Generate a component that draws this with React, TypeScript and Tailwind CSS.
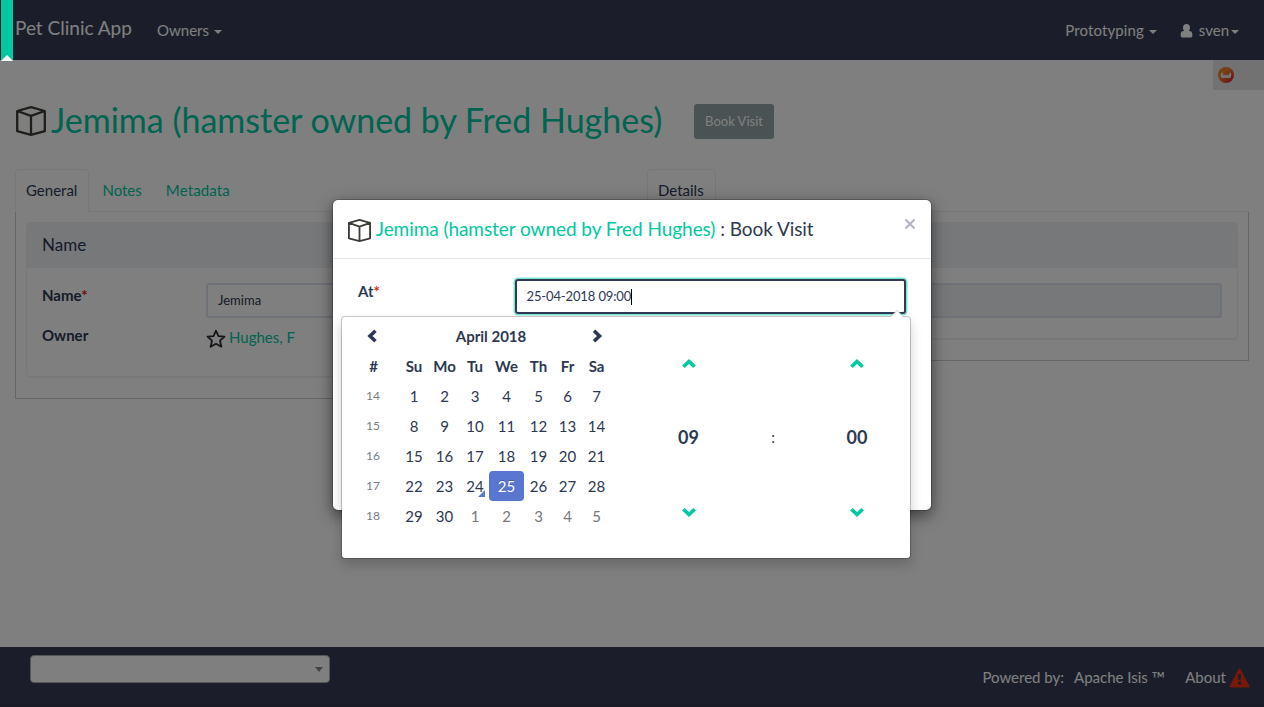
import type { ReactNode } from "react";

const weekdays = ["#", "Su", "Mo", "Tu", "We", "Th", "Fr", "Sa"];
const weeks = [
  { no: 14, days: [1, 2, 3, 4, 5, 6, 7] },
  { no: 15, days: [8, 9, 10, 11, 12, 13, 14] },
  { no: 16, days: [15, 16, 17, 18, 19, 20, 21] },
  { no: 17, days: [22, 23, 24, 25, 26, 27, 28] },
  { no: 18, days: [29, 30, 1, 2, 3, 4, 5] },
];

function Caret({ className = "h-1" }: { className?: string }) {
  return (
    <svg viewBox="0 0 8 4" preserveAspectRatio="none" className={`w-2 fill-current ${className}`}>
      <path d="M0 0h8L4 4z" />
    </svg>
  );
}

function BoxIcon({ className }: { className: string }) {
  return (
    <svg viewBox="0 0 30 30" className={className} fill="none" stroke="#3d3c36" strokeLinejoin="round">
      <path d="M15 1.200 28.800 5v20.200L15 28.800 1.200 25.200V5zM1.200 5 15 9.800 28.800 5M15 9.800v19" />
    </svg>
  );
}

function Chevron({ dir, className = "" }: { dir: "left" | "right" | "up" | "down"; className?: string }) {
  const paths = {
    left: "M10.5 1.8 5 7l5.5 5.2",
    right: "M4 1.8 9.5 7 4 12.2",
    up: "M1.4 9.8 7 4.5l5.6 5.3",
    down: "M1.4 4.2 7 9.5l5.6-5.3",
  };
  return (
    <svg viewBox="0 0 14 14" className={`size-[14px] ${className}`} fill="none" stroke="currentColor" strokeWidth="3.6">
      <path d={paths[dir]} />
    </svg>
  );
}

function Tab({ children, active = false }: { children: ReactNode; active?: boolean }) {
  return (
    <div
      className={`h-[43px] rounded-t border pt-[10px] leading-[21px] ${
        active ? "border-[#ecf0f1] border-b-white bg-white pl-[10px] pr-[11px]" : "mr-px border-transparent px-[10px] text-[#00c8a0]"
      }`}
    >
      {children}
    </div>
  );
}

function Header() {
  return (
    <header className="flex h-[60px] items-start bg-[#363d55] pl-[15px] pr-[25px] text-white">
      <div className="mt-[17px] w-[142px] text-[19px] leading-[22px]">Pet Clinic App</div>
      <div className="mt-5 flex items-center leading-[21px]">
        Owners
        <Caret className="ml-[5px] mt-[3px] h-1" />
      </div>
      <div className="ml-auto mt-5 flex items-center leading-[21px]">
        <span className="tracking-[0.1px]">Prototyping</span>
        <Caret className="ml-[5px] mt-[3px] h-1" />
        <svg viewBox="0 0 12 14" className="ml-[23px] mr-[6px] h-[14px] w-[13px] fill-current">
          <path d="M6 0C3.800 0 2.500 1.500 2.500 3.500c0 1.400.4 2.500 1.100 3.400H3C1 6.900.2 8.600.2 10v2c0 .9.5 1.400 1.400 1.400h8.800c.9 0 1.400-.5 1.400-1.400v-2c0-1.400-.8-3.100-2.800-3.100h-.6c.7-.9 1.100-2 1.100-3.400C9.500 1.500 8.200 0 6 0z" />
        </svg>
        sven
        <Caret className="ml-[2px] mt-[3px] h-1" />
      </div>
    </header>
  );
}

function Footer() {
  return (
    <footer className="mt-auto flex h-[60px] items-start border-b-2 border-[#30354d] bg-[#363d55] pl-[30px] pr-[14px] text-white">
      <div className="mt-2 flex h-7 w-[300px] items-center justify-end rounded border border-[#aaa] bg-white pr-[6px] text-[#888]">
        <Caret className="mt-px h-[5px]" />
      </div>
      <div className="ml-auto mt-5 flex h-[21px] items-center leading-[21px]">
        <span>Powered by:</span>
        <span className="ml-[10px]">
          Apache Isis <span className="align-[-2px] text-[18px] leading-none">™</span>
        </span>
        <span className="ml-5">About</span>
        <svg viewBox="0 0 21 20" className="ml-[3px] h-5 w-[21px]">
          <path d="M10.500 1.500 19.500 18.500H1.500z" fill="#ea3210" stroke="#ea3210" strokeWidth="2" strokeLinejoin="round" />
          <path d="M9 6.300h3l-.4 6H9.400zM9 13.700h3v2.800H9z" fill="#363d55" />
        </svg>
      </div>
    </footer>
  );
}

function DatePicker() {
  return (
    <div className="absolute left-[8px] top-[116px] flex h-[243px] w-[570px] rounded bg-white bg-clip-padding border border-black/20 pl-[5px] pt-[4px] shadow-[0_6px_12px_rgba(0,0,0,0.175)]">
      <svg viewBox="0 0 14 7" className="absolute -top-[7px] right-[6px] h-[7px] w-[14px]">
        <path d="M0 7 7 0l7 7z" fill="#ccc" />
        <path d="M1 7 7 1l6 6z" fill="#fff" />
      </svg>
      <div className="grid h-[210px] grid-cols-[53px_28px_33px_28px_35px_29px_29px_29px] grid-rows-7 place-items-center leading-[20px]">
        <Chevron dir="left" className="-ml-[3px]" />
        <div className="col-span-6 font-bold">April 2018</div>
        <Chevron dir="right" className="ml-px" />
        {weekdays.map((d) => (
          <div key={d} className="font-bold">
            {d}
          </div>
        ))}
        {weeks.map((w, row) => [
          <div key={w.no} className="-ml-px text-xs text-[#777c84]">
            {w.no}
          </div>,
          ...w.days.map((d, i) => (
            <div
              key={`${w.no}-${i}`}
              className={`relative flex h-[30px] w-full items-center justify-center ${
                row === 3 && d === 25
                  ? "rounded bg-[#5976d1] text-white [text-shadow:0_-1px_0_rgba(0,0,0,0.25)]"
                  : row === 4 && d < 20
                    ? "text-[#777]"
                    : ""
              }`}
            >
              {row === 3 && d === 24 && (
                <svg viewBox="0 0 7 7" className="absolute bottom-1 right-1 size-[7px]">
                  <path d="M7 0v7H0z" fill="#5976d1" />
                </svg>
              )}
              <span className="relative">{d}</span>
            </div>
          )),
        ])}
      </div>
      <div className="ml-[35px] grid h-[222px] w-[253px] grid-cols-[85px_84px_84px] grid-rows-3 place-items-center">
        <Chevron dir="up" className="mt-[11px] text-[#00c8a0]" />
        <span />
        <Chevron dir="up" className="mt-[11px] text-[#00c8a0]" />
        <b className="mt-[10px] text-[18px]">09</b>
        <span className="mt-[10px]">:</span>
        <b className="mt-[10px] text-[18px]">00</b>
        <Chevron dir="down" className="mt-[11px] text-[#00c8a0]" />
        <span />
        <Chevron dir="down" className="mt-[11px] text-[#00c8a0]" />
      </div>
    </div>
  );
}

function Dialog() {
  return (
    <div className="relative h-[312px] w-[600px] rounded-md border border-black/20 bg-white bg-clip-padding shadow-[0_5px_15px_rgba(0,0,0,0.5)]">
      <div className="flex h-[59px] items-start border-b border-[#e5e5e5] pl-[15px] pr-[15px]">
        <BoxIcon className="mt-[19px] size-[23px] stroke-[2.4]" />
        <h4 className="ml-[5px] mt-[18px] whitespace-pre text-[19px] leading-[22px] tracking-[-0.06px]">
          <span className="text-[#00c8a0]">Jemima (hamster owned by Fred Hughes)</span> : Book Visit
        </h4>
        <svg viewBox="0 0 12 12" className="ml-auto mt-[18px] size-3">
          <path d="m1.500 1.500 9 9m0-9-9 9" stroke="#b2b6c1" strokeWidth="2.100" />
        </svg>
      </div>
      <div className="flex items-start pl-[25px]">
        <div className="w-[157px] pt-[22px] leading-[21px] font-bold">
          At<span className="text-[#d9230f]">*</span>
        </div>
        <div className="mt-5 flex h-[35px] w-[391px] items-center rounded-[3px] border-2 border-[#303a54] px-[9.500px] pt-px text-[13px] tracking-[-0.13px] shadow-[0_0_0_1.5px_#7ce8d2]">
          25-04-2018 09:00
          <span className="h-4 w-px bg-black" />
        </div>
      </div>
      <DatePicker />
    </div>
  );
}

export default function App() {
  return (
    <div className="relative flex h-[707px] w-[1264px] flex-col overflow-hidden bg-white font-['Lato',sans-serif] text-[15px] text-[#2d3852]">
      <Header />
      <div className="flex h-[30px] justify-end">
        <div className="h-[30px] w-[51px] bg-[#e5e5e5] pl-[5px] pt-[7px]">
          <svg viewBox="0 0 16 16" className="size-4">
            <defs>
              <linearGradient id="ember" x1="0" y1="0" x2="1" y2="1">
                <stop offset=".35" stopColor="#f08228" />
                <stop offset="1" stopColor="#d51438" />
              </linearGradient>
            </defs>
            <circle cx="8" cy="8" r="8" fill="url(#ember)" />
            <path d="M3 5.800h1.500l1 2.400 1.200-.8 1.300.9 1.300-.9 1.200.8 1-2.400H13c.3 2 .2 3.800-.4 5.200H3.400c-.6-1.400-.7-3.200-.4-5.200z" fill="#e9e4e0" />
          </svg>
        </div>
      </div>
      <div className="flex h-[79px] items-start pl-4 pt-4">
        <BoxIcon className="size-[30px] stroke-[2.3]" />
        <h1 className="-mt-[6px] ml-[5px] w-[613px] whitespace-nowrap text-[34px] leading-[40px] text-[#00c8a0]">
          Jemima (hamster owned by Fred Hughes)
        </h1>
        <div className="-mt-[2px] ml-[30px] flex h-[35px] w-20 items-center justify-center rounded-[3px] bg-[#95a5a6] text-[13px] text-white">
          Book Visit
        </div>
      </div>
      <main className="flex items-start gap-[30px] px-[15px]">
        <section className="w-[602px]">
          <div className="flex h-[43px]">
            <Tab active>General</Tab>
            <div className="flex flex-1 border-b border-[#ecf0f1] pl-[2px]">
              <Tab>Notes</Tab>
              <div className="ml-px tracking-[0.15px]">
                <Tab>Metadata</Tab>
              </div>
            </div>
          </div>
          <div className="h-[187px] border border-t-0 border-[#ccc] px-[10px] pt-[10px]">
            <div className="h-[155px] overflow-hidden rounded border border-[#ecf0f1] shadow-[0_1px_1px_rgba(0,0,0,0.05)]">
              <div className="h-[45px] bg-[#ecf0f4] pl-[15px] pt-[11px] text-[17px] leading-[22px]">Name</div>
              <div className="flex items-start pl-[15px] pt-[15px]">
                <div className="mt-[2px] w-[164px] font-bold leading-[21px]">
                  Name<span className="text-[#d9230f]">*</span>
                </div>
                <div className="flex h-[35px] flex-1 items-center rounded-[3px] border-2 border-[#dce4ec] pl-[10px] text-[13px]">Jemima</div>
              </div>
              <div className="flex items-start pl-[15px] pt-[7px]">
                <div className="w-[164px] font-bold leading-[21px]">Owner</div>
                <svg viewBox="0 0 20 20" className="mt-[4px] size-5" fill="none" stroke="#292c33" strokeWidth="1.800" strokeLinejoin="round">
                  <path d="m10 1.700 2.500 5.500 6 .5-4.500 4 1.400 6L10 14.700l-5.400 3 1.400-6-4.500-4 6-.5z" />
                </svg>
                <span className="ml-[3px] mt-[2px] leading-[21px] text-[#00c8a0]">Hughes, F</span>
              </div>
            </div>
          </div>
        </section>
        <section className="w-[602px]">
          <div className="flex">
            <Tab active>Details</Tab>
            <div className="flex-1 border-b border-[#ecf0f1]" />
          </div>
          <div className="h-[149px] border border-t-0 border-[#ccc] px-[10px] pt-[10px]">
            <div className="h-[117px] rounded border border-[#ecf0f1] shadow-[0_1px_1px_rgba(0,0,0,0.05)]">
              <div className="h-[45px] bg-[#ecf0f4]" />
              <div className="mx-[15px] mt-[15px] h-[35px] rounded-[3px] border-2 border-[#dce4ec] bg-[#ecf0f4]" />
            </div>
          </div>
        </section>
      </main>
      <Footer />
      <div className="absolute inset-0 flex items-start justify-center bg-black/50 pt-[199px]">
        <Dialog />
      </div>
      <svg viewBox="0 0 12 61" className="absolute left-px top-0 h-[61px] w-3">
        <path d="M0 0h12v61H0z" fill="#00c8a0" />
        <path d="m0 61 6-6 6 6z" fill="#fff" />
      </svg>
    </div>
  );
}
